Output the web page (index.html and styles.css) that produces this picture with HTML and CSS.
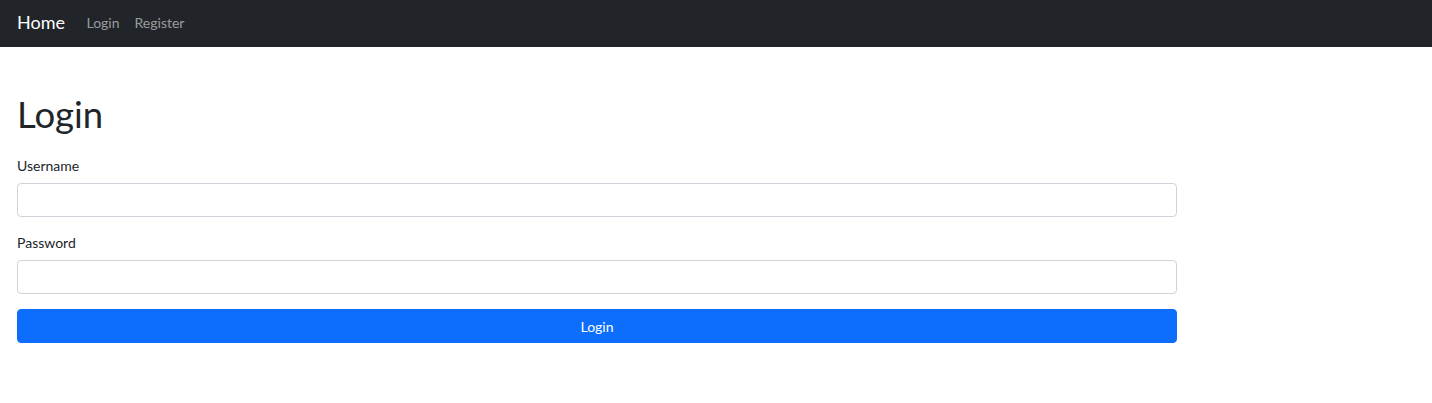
FILE: index.html
```html
<!DOCTYPE html>
<html lang="en">
<head>
<meta charset="utf-8">
<title>Login</title>
<link rel="stylesheet" href="styles.css">
</head>
<body>
<nav class="navbar">
  <a class="brand" href="#">Home</a>
  <ul class="nav">
    <li><a class="nav-link" href="#">Login</a></li>
    <li><a class="nav-link" href="#">Register</a></li>
  </ul>
</nav>
<main class="container">
  <h1 class="title">Login</h1>
  <form class="form">
    <div class="field">
      <label class="label" for="username">Username</label>
      <input class="input" id="username" type="text">
    </div>
    <div class="field">
      <label class="label" for="password">Password</label>
      <input class="input" id="password" type="password">
    </div>
    <button class="btn" type="button">Login</button>
  </form>
</main>
</body>
</html>
```
FILE: styles.css
```css
* { box-sizing: border-box; }
html, body { margin: 0; padding: 0; }
body {
  font-family: "Lato", "Noto Sans", sans-serif;
  font-size: 14px;
  line-height: 1.5;
  color: #212529;
  background: #fff;
}
.navbar {
  height: 47px;
  background: #212529;
  display: flex;
  align-items: center;
  padding: 0 17px 2px;
}
.brand {
  color: #fff;
  text-decoration: none;
  font-size: 18px;
  margin-right: 14px;
}
.nav {
  list-style: none;
  margin: 0;
  padding: 0;
  display: flex;
}
.nav-link {
  display: block;
  color: rgba(255,255,255,.55);
  text-decoration: none;
  padding: 7px 7.5px;
}
.container {
  padding: 0 17px;
}
.title {
  font-size: 36.5px;
  font-weight: 400;
  line-height: 42px;
  margin: 46px 0 20px;
}
.form {
  width: 1160px;
}
.field {
  margin-bottom: 15px;
}
.label {
  display: block;
  margin-bottom: 7px;
}
.input {
  display: block;
  width: 100%;
  height: 34px;
  padding: 5px 10px;
  font: inherit;
  border: 1px solid #ced4da;
  border-radius: 4px;
  background: #fff;
}
.btn {
  display: block;
  width: 100%;
  height: 34px;
  font: inherit;
  color: #fff;
  background: #0d6efd;
  border: 1px solid #0d6efd;
  border-radius: 4px;
}
```
